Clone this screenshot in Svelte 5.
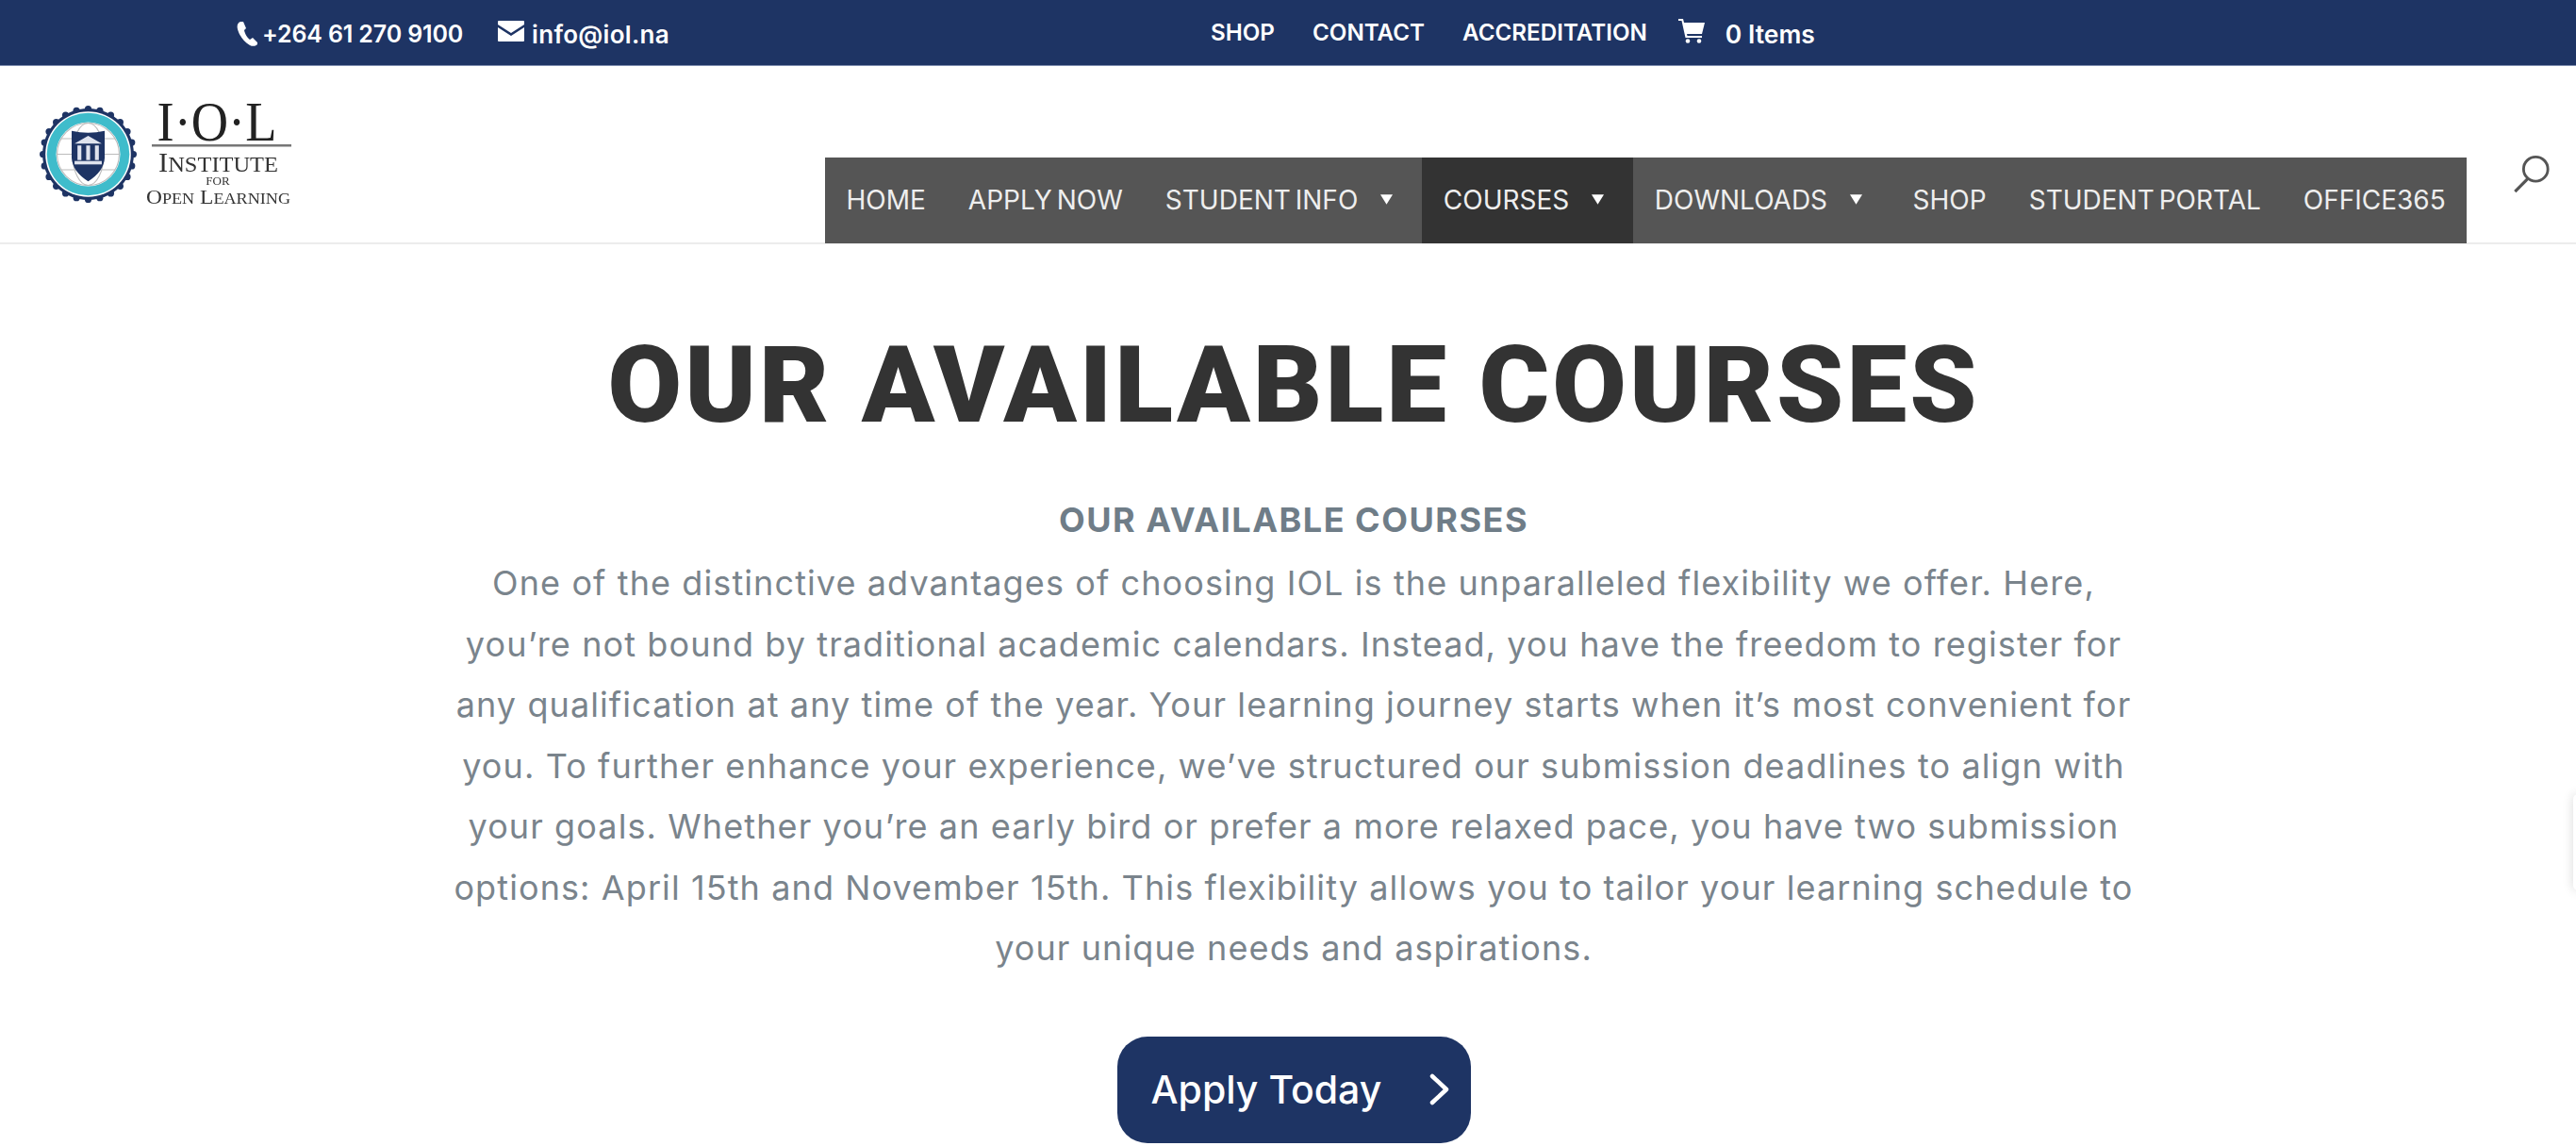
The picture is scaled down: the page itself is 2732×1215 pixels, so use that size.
<script>
  const navItems = [
    { label: 'HOME' },
    { label: 'APPLY NOW' },
    { label: 'STUDENT INFO', caret: true },
    { label: 'COURSES', caret: true, active: true },
    { label: 'DOWNLOADS', caret: true },
    { label: 'SHOP' },
    { label: 'STUDENT PORTAL' },
    { label: 'OFFICE365' },
  ];
  const topLinks = ['SHOP', 'CONTACT', 'ACCREDITATION'];

  const lines = [
    'One of the distinctive advantages of choosing IOL is the unparalleled flexibility we offer. Here,',
    'you’re not bound by traditional academic calendars. Instead, you have the freedom to register for',
    'any qualification at any time of the year. Your learning journey starts when it’s most convenient for',
    'you. To further enhance your experience, we’ve structured our submission deadlines to align with',
    'your goals. Whether you’re an early bird or prefer a more relaxed pace, you have two submission',
    'options: April 15th and November 15th. This flexibility allows you to tailor your learning schedule to',
    'your unique needs and aspirations.',
  ];

  // scalloped edge of the seal
  const bumps = Array.from({ length: 24 }, (_, i) => {
    const a = (i / 24) * Math.PI * 2;
    return { x: 50 + Math.cos(a) * 46.5, y: 50 + Math.sin(a) * 46.5 };
  });
</script>

<div class="page">
  <div class="topbar">
    <div class="contact">
      <span class="contact__item">
        <svg class="icon-phone" viewBox="0 0 24 28" aria-hidden="true">
          <path d="M5 1 C2 2 1 5 2 9 C4 16 9 23 15 26 C18 27.500 21 27 23 25 L23 23 L18 18 L15 20 C12 18 9.500 13 9 10 L11 8 L8 1 Z" fill="#fff" />
        </svg>
        +264 61 270 9100
      </span>
      <span class="contact__item contact__item--mail">
        <svg class="icon-mail" viewBox="0 0 28 22" aria-hidden="true">
          <path d="M1 0 H27 A1 1 0 0 1 28 1 V4 L14 13 L0 4 V1 A1 1 0 0 1 1 0 Z M0 7 L14 16 L28 7 V21 A1 1 0 0 1 27 22 H1 A1 1 0 0 1 0 21 Z" fill="#fff" />
        </svg>
        info@iol.na
      </span>
    </div>
    <nav class="toplinks">
      {#each topLinks as link}
        <a href="#top">{link}</a>
      {/each}
    </nav>
    <div class="cart">
      <svg class="icon-cart" viewBox="0 0 28 26" aria-hidden="true">
        <path d="M0 0 H5 L6 4 H28 L25 16 H9 L9.500 18 H25 V20 H7.500 L3.500 2 H0 Z" fill="#fff" />
        <circle cx="10" cy="23.500" r="2.300" fill="#fff" />
        <circle cx="22" cy="23.500" r="2.300" fill="#fff" />
      </svg>
      <span>0 Items</span>
    </div>
  </div>

  <header class="header">
    <svg class="logo" viewBox="0 0 270 110" aria-label="Institute for Open Learning">
      <g transform="translate(0 3) scale(1.03)">
        {#each bumps as b}
          <circle cx={b.x} cy={b.y} r="3.500" fill="#1e3464" />
        {/each}
        <circle cx="50" cy="50" r="47" fill="#1e3464" />
        <circle cx="50" cy="50" r="44" fill="#fff" />
        <circle cx="50" cy="50" r="42.500" fill="#3fbccb" />
        <circle cx="50" cy="50" r="33" fill="#fff" />
        <g fill="none" stroke="#bbb" stroke-width="1.100">
          <circle cx="50" cy="50" r="32" />
          <ellipse cx="50" cy="50" rx="16" ry="32" />
          <path d="M18 50 H82 M22 34 H78 M22 66 H78" />
        </g>
        <path d="M33 26 Q50 30 67 26 V54 Q66 68 50 78 Q34 68 33 54 Z" fill="#1e3464" />
        <g fill="#dfe3ee">
          <path d="M50 31 L64 39 H36 Z" />
          <rect x="39" y="41" width="4" height="15" />
          <rect x="48" y="41" width="4" height="15" />
          <rect x="57" y="41" width="4" height="15" />
          <rect x="36" y="57" width="28" height="3.500" />
        </g>
      </g>
      <g class="logo__type" text-anchor="middle">
        <text class="logo__iol" x="188" y="40" textLength="127" lengthAdjust="spacingAndGlyphs">I·O·L</text>
        <rect x="119" y="44" width="148" height="2.500" fill="#777" />
        <text class="logo__inst" x="189.500" y="73" textLength="127" lengthAdjust="spacingAndGlyphs">I<tspan font-size="24">NSTITUTE</tspan></text>
        <text class="logo__for" x="189" y="87">FOR</text>
        <text class="logo__open" x="189.500" y="107" textLength="153" lengthAdjust="spacingAndGlyphs">O<tspan font-size="17">PEN</tspan> L<tspan font-size="17">EARNING</tspan></text>
      </g>
    </svg>

    <nav class="mainnav">
      {#each navItems as item}
        <a href="#top" class="mainnav__item" class:mainnav__item--active={item.active}>
          {item.label}
          {#if item.caret}
            <svg class="caret" viewBox="0 0 10 10" aria-hidden="true"><path d="M0 1 H10 L5 9 Z" fill="#fff" /></svg>
          {/if}
        </a>
      {/each}
    </nav>

    <svg class="search" viewBox="0 0 42 44" aria-label="Search">
      <circle cx="26" cy="17" r="13.500" fill="none" stroke="#555" stroke-width="3" />
      <path d="M17 28 L3 42" stroke="#555" stroke-width="3.400" fill="none" />
    </svg>
  </header>

  <main class="content">
    <h1>OUR AVAILABLE COURSES</h1>
    <h2>OUR AVAILABLE COURSES</h2>
    <div class="copy">
      {#each lines as line}
        <p>{line}</p>
      {/each}
    </div>
    <a href="#top" class="cta">
      <span>Apply Today</span>
      <svg viewBox="0 0 22 34" aria-hidden="true">
        <path d="M3 3 L18 17 L3 31" fill="none" stroke="#fff" stroke-width="4.500" stroke-linecap="round" stroke-linejoin="round" />
      </svg>
    </a>
  </main>

  <div class="side-tab"></div>
</div>

<style>
  :global(body) {
    margin: 0;
    background: #fff;
  }

  .page {
    position: relative;
    width: 2732px;
    height: 1215px;
    overflow: hidden;
    background: #fff;
    font-family: "Inter", "Liberation Sans", sans-serif;
  }

  a {
    color: inherit;
    text-decoration: none;
  }

  /* top strip */
  .topbar {
    display: flex;
    align-items: center;
    height: 70px;
    box-sizing: border-box;
    border-bottom: 1px solid #7f8db0;
    padding: 3px 0 0 250px;
    background: #1e3464;
    color: #fff;
    font-weight: 600;
  }

  .contact {
    display: flex;
    flex-shrink: 0;
    gap: 37px;
    width: 1034px;
    font-size: 25px;
  }

  .contact__item {
    display: flex;
    align-items: center;
    gap: 4px;
    white-space: nowrap;
    letter-spacing: -0.150px;
  }

  .contact__item--mail {
    gap: 8px;
    font-size: 26px;
    letter-spacing: 0.300px;
  }

  .icon-phone {
    width: 24px;
    height: 28px;
  }

  .icon-mail {
    width: 28px;
    height: 22px;
    margin-top: -6px;
  }

  .toplinks {
    display: flex;
    gap: 40px;
    font-size: 24.200px;
    margin-top: -3px;
  }

  .cart {
    display: flex;
    align-items: center;
    gap: 22px;
    margin-left: 33px;
    font-size: 26.500px;
  }

  .icon-cart {
    width: 28px;
    height: 26px;
    margin-top: -6px;
  }

  /* logo + main menu */
  .header {
    display: flex;
    align-items: flex-end;
    height: 189px;
    box-sizing: border-box;
    border-bottom: 2px solid #ececec;
    padding-left: 42px;
  }

  .logo {
    flex-shrink: 0;
    width: 270px;
    height: 110px;
    margin-bottom: 38px;
    filter: blur(0.5px);
  }

  .logo__type {
    font-family: "Liberation Serif", serif;
    fill: #222;
  }

  .logo__iol {
    font-size: 60px;
  }

  .logo__inst {
    font-size: 30px;
    fill: #333;
  }

  .logo__for {
    font-size: 13px;
    fill: #333;
  }

  .logo__open {
    font-size: 22px;
    fill: #333;
  }

  .mainnav {
    display: flex;
    flex-shrink: 0;
    align-items: stretch;
    height: 91px;
    margin-left: 563px;
    margin-bottom: -1px;
    background: #555;
    color: #eee;
    font-size: 28px;
    word-spacing: -3px;
  }

  .mainnav__item {
    display: flex;
    align-items: center;
    gap: 24px;
    padding: 0 22.500px 2px;
    white-space: nowrap;
  }

  .mainnav__item:has(.caret) {
    padding-right: 31px;
  }

  .mainnav__item--active {
    background: #333;
  }

  .caret {
    width: 13px;
    height: 13px;
  }

  .search {
    flex-shrink: 0;
    width: 41px;
    height: 42px;
    margin-left: 48px;
    margin-bottom: 52px;
  }

  /* page body */
  .content {
    display: flex;
    flex-direction: column;
    align-items: center;
    margin-left: 12px;
    text-align: center;
  }

  h1 {
    margin: 89px 0 0;
    color: #333;
    font-family: "Roboto", "Liberation Sans", sans-serif;
    font-size: 114px;
    font-weight: 900;
    letter-spacing: 3px;
    line-height: 120px;
    white-space: nowrap;
  }

  h2 {
    margin: 58px 0 0;
    color: #6f7d88;
    font-size: 36px;
    font-weight: 700;
    letter-spacing: 1.500px;
    line-height: 50px;
  }

  .copy {
    margin-top: 10px;
    color: #7a848c;
    font-size: 36px;
    letter-spacing: 1.100px;
    line-height: 64.500px;
    white-space: nowrap;
  }

  .copy p {
    margin: 0;
  }

  .cta {
    display: flex;
    align-items: center;
    justify-content: space-between;
    box-sizing: border-box;
    width: 375px;
    height: 113px;
    margin-top: 61px;
    padding: 0 22px 0 36px;
    border-radius: 32px;
    background: #1e3464;
    color: #fff;
    font-size: 41px;
    font-weight: 500;
  }

  .cta svg {
    width: 22px;
    height: 34px;
  }

  .side-tab {
    position: absolute;
    top: 842px;
    left: 2729px;
    width: 10px;
    height: 102px;
    border-radius: 6px;
    background: #fff;
    box-shadow: 0 0 12px rgba(0, 0, 0, 0.16);
  }
</style>
